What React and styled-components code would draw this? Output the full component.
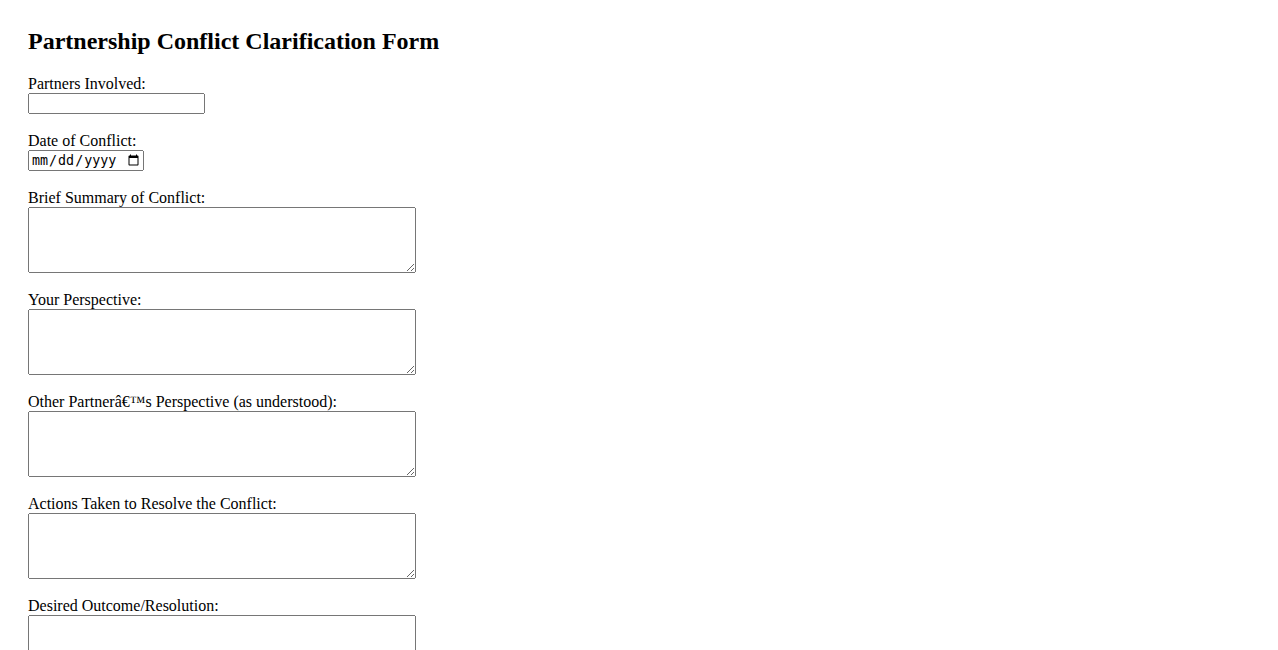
import React from "react";
import styled, { createGlobalStyle } from "styled-components";

const Global = createGlobalStyle`
  html, body { margin: 0; padding: 0; background: #fff; }
  body { font-family: "Liberation Serif", "Times New Roman", serif; font-size: 16px; color: #000; }
`;

const Page = styled.div`
  padding: 28px;
`;

const Title = styled.h2`
  margin: 0 0 20px;
  font-size: 24px;
  font-weight: bold;
`;

const Form = styled.form`
  display: flex;
  flex-direction: column;
  gap: 18px;
`;

const Field = styled.div`
  display: flex;
  flex-direction: column;
  align-items: flex-start;
`;

const Label = styled.label`
  display: block;
  line-height: 18px;
`;

const TextInput = styled.input`
  display: block;
  margin: 0;
  width: 177px;
  height: 21px;
  box-sizing: border-box;
`;

const DateInput = styled.input`
  display: block;
  margin: 0;
  width: 116px;
  height: 21px;
  box-sizing: border-box;
`;

const Area = styled.textarea`
  display: block;
  margin: 0;
  width: 388px;
  height: 66px;
  box-sizing: border-box;
`;

const areas = [
  ["summary", "Brief Summary of Conflict:"],
  ["yours", "Your Perspective:"],
  ["other", "Other Partner\u00e2\u20ac\u2122s Perspective (as understood):"],
  ["actions", "Actions Taken to Resolve the Conflict:"],
  ["outcome", "Desired Outcome/Resolution:"],
  ["notes", "Additional Notes:"],
];

export default function App() {
  return (
    <Page>
      <Global />
      <Title>Partnership Conflict Clarification Form</Title>
      <Form onSubmit={(e) => e.preventDefault()}>
        <Field>
          <Label htmlFor="partners">Partners Involved:</Label>
          <TextInput id="partners" type="text" />
        </Field>
        <Field>
          <Label htmlFor="date">Date of Conflict:</Label>
          <DateInput id="date" type="date" />
        </Field>
        {areas.map(([id, text]) => (
          <Field key={id}>
            <Label htmlFor={id}>{text}</Label>
            <Area id={id} />
          </Field>
        ))}
      </Form>
    </Page>
  );
}
